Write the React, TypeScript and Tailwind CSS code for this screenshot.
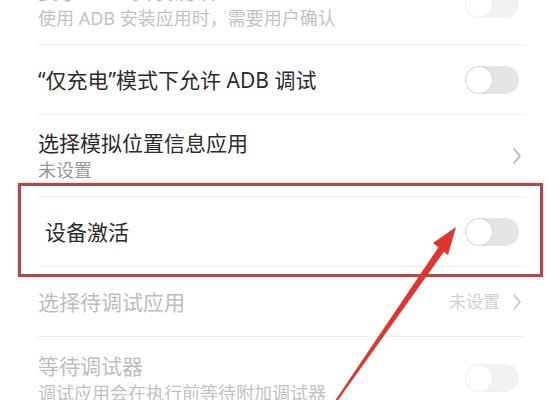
const FONT = { fontFamily: '"Noto Sans", "Noto Sans CJK SC", sans-serif' };

function Toggle({ dim = false }: { dim?: boolean }) {
  return (
    <div
      className={`relative h-[28px] w-[54px] shrink-0 rounded-full ${dim ? 'bg-[#f2f2f2]' : 'bg-[#e4e4e4]'}`}
    >
      <div
        className={`absolute left-[1px] top-[1px] h-[26px] w-[26px] rounded-full bg-white ${dim ? 'shadow-[0_0_1px_rgba(0,0,0,0.08)]' : 'shadow-[0_0_2px_rgba(0,0,0,0.18)]'}`}
      />
    </div>
  );
}

function Chevron({ dim = false }: { dim?: boolean }) {
  return (
    <svg width="10" height="18" viewBox="0 0 10 18" className="shrink-0">
      <polyline
        points="2,2 8,9 2,16"
        fill="none"
        stroke={dim ? '#c4c4c4' : '#b0b0b0'}
        strokeWidth="1.6"
        strokeLinecap="round"
        strokeLinejoin="round"
      />
    </svg>
  );
}

type Row = {
  title: string;
  sub?: string;
  right: 'toggle' | 'chevron';
  value?: string;
  dim?: boolean;
  titleDim?: boolean;
  indent?: boolean;
};

const rows: Row[] = [
  { title: '要求 USB 安装确认', sub: '使用 ADB 安装应用时，需要用户确认', right: 'toggle', dim: true, titleDim: true },
  { title: '“仅充电”模式下允许 ADB 调试', right: 'toggle' },
  { title: '选择模拟位置信息应用', sub: '未设置', right: 'chevron' },
  { title: '设备激活', right: 'toggle', indent: true },
  { title: '选择待调试应用', right: 'chevron', value: '未设置', dim: true, titleDim: true },
  { title: '等待调试器', sub: '调试应用会在执行前等待附加调试器', right: 'toggle', dim: true, titleDim: true },
];

function SettingRow({ row, last }: { row: Row; last: boolean }) {
  return (
    <div
      className={`ml-[38px] mr-[25px] flex items-center ${row.sub ? 'h-[82px]' : 'h-[70px]'} ${last ? '' : 'border-b border-[#ececec]'}`}
    >
      <div className={`flex min-w-0 flex-1 flex-col ${row.indent ? 'pl-[7px]' : ''}`}>
        <div
          className={`text-[21px] leading-[28px] ${row.titleDim ? 'text-[#bdbdbd]' : 'text-[#2b2b2b]'}`}
        >
          {row.title}
        </div>
        {row.sub && (
          <div
            className={`mt-[1px] whitespace-nowrap text-[18px] leading-[24px] ${row.dim ? 'text-[#c2c2c2]' : 'text-[#999999]'}`}
          >
            {row.sub}
          </div>
        )}
      </div>
      {row.right === 'toggle' ? (
        <div className="pr-[6px]">
          <Toggle dim={row.dim} />
        </div>
      ) : (
        <div className="flex items-center gap-[12px] pr-[3px]">
          {row.value && <span className="text-[17px] text-[#cfcfcf]">{row.value}</span>}
          <Chevron dim={row.dim} />
        </div>
      )}
    </div>
  );
}

export default function App() {
  return (
    <div className="relative h-[400px] w-[550px] overflow-hidden bg-white" style={FONT}>
      <div className="mt-[-37px]">
        {rows.map((r, i) => (
          <SettingRow key={r.title} row={r} last={i === rows.length - 1} />
        ))}
      </div>

      {/* annotation box */}
      <div className="pointer-events-none absolute left-[18px] top-[183px] h-[94px] w-[525px] border-[3px] border-[#ad4a45] shadow-[0_0_2px_rgba(220,80,70,0.5)]" />

      {/* annotation arrow */}
      <svg className="pointer-events-none absolute left-0 top-0" width="550" height="400" viewBox="0 0 550 400">
        <polygon
          points="444.5,251 439,246.5 333.2,403.4 334.8,404.6"
          fill="#e0342c"
        />
        <polygon points="456,227 433,243 448,255" fill="#e0342c" />
      </svg>
    </div>
  );
}
